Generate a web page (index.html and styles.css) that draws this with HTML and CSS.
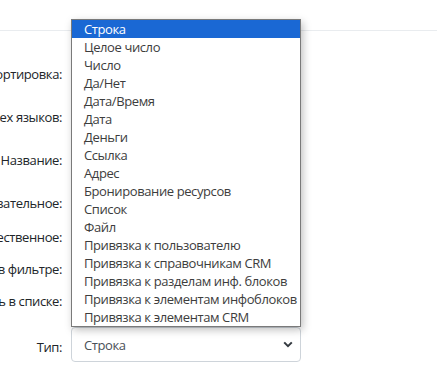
FILE: index.html
```html
<!DOCTYPE html>
<html lang="ru">
<head>
    <meta charset="UTF-8">
    <meta name="viewport" content="width=device-width, initial-scale=1.0">
    <link rel="stylesheet" href="styles.css">
    <title>Поле</title>
</head>
<body>

    <div class="header"></div>

    <form class="field-form">
        <div class="row">
            <label class="row-label">Сортировка:</label>
            <div class="row-field"></div>
        </div>
        <div class="row">
            <label class="row-label">Для всех языков:</label>
            <div class="row-field"></div>
        </div>
        <div class="row">
            <label class="row-label">Название:</label>
            <div class="row-field"></div>
        </div>
        <div class="row">
            <label class="row-label">Обязательное:</label>
            <div class="row-field"></div>
        </div>
        <div class="row row-check">
            <label class="row-label">Множественное:</label>
            <div class="row-field"></div>
        </div>
        <div class="row row-check">
            <label class="row-label">Показывать в фильтре:</label>
            <div class="row-field"></div>
        </div>
        <div class="row row-check">
            <label class="row-label">Показывать в списке:</label>
            <div class="row-field"></div>
        </div>
        <div class="row row-select">
            <label class="row-label">Тип:</label>
            <div class="row-field">
                <div class="select">
                    <span>Строка</span>
                    <svg class="chevron" width="10" height="7" viewBox="0 0 10 7">
                        <path d="M1.2 1.4 L5 5.2 L8.8 1.4" fill="none" stroke="#343a40" stroke-width="2"/>
                    </svg>
                </div>
            </div>
        </div>
    </form>

    <!-- open list of the "Тип" select -->
    <ul class="listbox">
        <li class="selected">Строка</li>
        <li>Целое число</li>
        <li>Число</li>
        <li>Да/Нет</li>
        <li>Дата/Время</li>
        <li>Дата</li>
        <li>Деньги</li>
        <li>Ссылка</li>
        <li>Адрес</li>
        <li>Бронирование ресурсов</li>
        <li>Список</li>
        <li>Файл</li>
        <li>Привязка к пользователю</li>
        <li>Привязка к справочникам CRM</li>
        <li>Привязка к разделам инф. блоков</li>
        <li>Привязка к элементам инфоблоков</li>
        <li>Привязка к элементам CRM</li>
    </ul>

</body>
</html>
```

FILE: styles.css
```css
body {
    font-family: 'Open Sans', 'Liberation Sans', sans-serif;
    font-size: 13px;
    letter-spacing: -0.4px;
    color: #212529;
    background-color: #fff;
    margin: 0;
    padding: 0;
    overflow: hidden;
}

.header {
    height: 30px;
    border-bottom: 1px solid #e9ecef;
}

.field-form {
    margin-top: 21px;
}

.row {
    display: flex;
    align-items: center;
    height: 43px;
}

.row-check {
    height: 32px;
    align-items: flex-start;
    padding-top: 4px;
    box-sizing: border-box;
}

.row-select {
    height: auto;
    margin-top: 7px;
}

.row-select .row-label {
    padding-top: 4px;
}

.row-label {
    flex: none;
    width: 62px;
    display: flex;
    justify-content: flex-end;
    white-space: nowrap;
    line-height: 18px;
}

.row-field {
    width: 230px;
    margin-left: 9px;
}

.select {
    height: 35px;
    box-sizing: border-box;
    border: 1px solid #ced4da;
    border-radius: 4px;
    padding: 0 7px 0 12px;
    display: flex;
    align-items: center;
    justify-content: space-between;
    color: #495057;
}

.listbox {
    position: absolute;
    top: 19px;
    left: 71px;
    width: 230px;
    box-sizing: border-box;
    margin: 0;
    padding: 0;
    list-style: none;
    background-color: #fff;
    border: 1px solid #7a7a7a;
    box-shadow: 2px 3px 8px rgba(0, 0, 0, 0.25);
}

.listbox li {
    height: 18px;
    line-height: 18px;
    padding-left: 12px;
    color: #3d3d3d;
    white-space: nowrap;
}

.listbox .selected {
    background-color: #1a68d4;
    color: #fff;
}
```
